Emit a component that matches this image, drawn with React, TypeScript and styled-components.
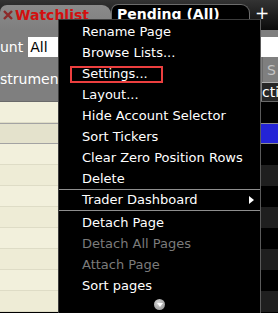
import React from 'react'
import styled, { createGlobalStyle } from 'styled-components'

const GlobalStyle = createGlobalStyle`
  html, body {
    margin: 0;
    padding: 0;
    background: #000;
  }
  body {
    font-family: 'DejaVu Sans', Verdana, sans-serif;
  }
`

const Screen = styled.div`
  position: relative;
  width: 278px;
  height: 313px;
  overflow: hidden;
  background: #000;
  display: flex;
  flex-direction: column;
`

const TabBar = styled.div`
  height: 30px;
  flex: none;
  display: flex;
  align-items: flex-end;
  background: linear-gradient(#333, #0b0b0b);
`

const Tab = styled.div<{ $active?: boolean }>`
  box-sizing: border-box;
  display: flex;
  align-items: flex-start;
  gap: 2px;
  flex: none;
  height: ${p => (p.$active ? 25 : 26)}px;
  width: ${p => (p.$active ? 111 : 139)}px;
  padding: ${p => (p.$active ? '2px 0 0 3px' : '1px 0 0 5px')};
  font: bold 14px/16px 'DejaVu Sans', Verdana, sans-serif;
  color: ${p => (p.$active ? '#d30f0f' : '#fff')};
  background: ${p => (p.$active ? 'linear-gradient(#8a8a8a, #7f7f7f)' : '#000')};
  border: ${p => (p.$active ? 'none' : '1px solid #6c6c6c')};
  border-bottom: none;
  border-radius: 7px 9px 0 0;
  white-space: nowrap;
`

const CloseIcon = styled.svg`
  margin-top: 3px;
  flex: none;
`

const AddTab = styled.span`
  margin: 0 0 8px 5px;
  color: #fff;
  font: 17px/17px 'DejaVu Sans', sans-serif;
`

const Panel = styled.div`
  flex: none;
  background: #7f7f7f;
  border-bottom: 1px solid #6a6a6a;
`

const FilterRow = styled.div`
  display: flex;
  align-items: center;
  gap: 5px;
  height: 20px;
  padding-top: 7px;
  color: #fff;
  font: 14px 'DejaVu Sans', sans-serif;
`

const FilterInput = styled.div`
  flex: 1;
  height: 20px;
  background: #fff;
  color: #000;
  padding-left: 2px;
  line-height: 20px;
`

const HeaderRow = styled.div`
  display: flex;
  height: 44px;
  color: #fff;
  font: 14px 'DejaVu Sans', sans-serif;
`

const HeaderCell = styled.div`
  flex: none;
  width: 262px;
  display: flex;
  align-items: center;
  white-space: nowrap;
  overflow: hidden;
`

const StackCell = styled.div`
  flex: 1;
  min-width: 0;
  display: flex;
  flex-direction: column;
`

const SubHead = styled.div<{ $dim?: boolean }>`
  flex: ${p => (p.$dim ? 26 : 18)};
  display: flex;
  align-items: center;
  padding-left: ${p => (p.$dim ? 4 : 0)}px;
  color: ${p => (p.$dim ? '#c4c4c4' : '#fff')};
  background: ${p => (p.$dim ? '#7f7f7f' : '#262626')};
  border-left: ${p => (p.$dim ? '1px solid #6a6a6a' : 'none')};
  border-top: ${p => (p.$dim ? 'none' : '1px solid #b0b0b0')};
  white-space: nowrap;
  overflow: hidden;
`

const Rows = styled.div`
  flex: 1;
  display: flex;
  flex-direction: column;
`

const Row = styled.div`
  display: flex;
  height: 21px;
  flex: none;
`

const NameCell = styled.div<{ $selected?: boolean; $odd?: boolean }>`
  width: 160px;
  box-sizing: border-box;
  background: ${p => (p.$selected ? '#e4e2cc' : p.$odd ? '#eeecd6' : '#f2f0dc')};
  border-bottom: 1px solid ${p => (p.$selected ? '#a3a3a3' : '#dedcc6')};
  border-top: ${p => (p.$selected ? '1px solid #a3a3a3' : 'none')};
`

const DataCell = styled.div<{ $selected?: boolean; $odd?: boolean }>`
  flex: 1;
  box-sizing: border-box;
  background: ${p => (p.$selected ? '#2424d6' : p.$odd ? '#1f1f1f' : '#000')};
  border-top: ${p => (p.$selected ? '1px solid #8c8c8c' : 'none')};
  border-bottom: ${p => (p.$selected ? '1px solid #8c8c8c' : 'none')};
`

const Menu = styled.div`
  position: absolute;
  left: 58px;
  top: 19px;
  width: 203px;
  height: 300px;
  box-sizing: border-box;
  padding-top: 1px;
  background: #000;
  border: 1px solid #3c3c3c;
  border-right-color: #5a5a5a;
  font: 13px 'DejaVu Sans', Verdana, sans-serif;
`

const MenuItem = styled.div<{ $disabled?: boolean; $short?: boolean }>`
  position: relative;
  height: ${p => (p.$short ? 20 : 21)}px;
  line-height: ${p => (p.$short ? 20 : 21)}px;
  padding-left: 23px;
  color: ${p => (p.$disabled ? '#7b7b7b' : '#fff')};
  white-space: nowrap;
`

const Highlight = styled.span`
  position: absolute;
  left: 11px;
  top: 3px;
  width: 93px;
  height: 17px;
  box-sizing: border-box;
  border: 2px solid #ec3f3f;
`

const SubArrow = styled.span`
  position: absolute;
  right: 6px;
  top: 6px;
  width: 0;
  height: 0;
  border-left: 5px solid #fff;
  border-top: 4px solid transparent;
  border-bottom: 4px solid transparent;
`

const Separator = styled.div<{ $gap?: number }>`
  height: 1px;
  background: #8e8e8e;
  margin-bottom: ${p => p.$gap ?? 0}px;
`

const ScrollFoot = styled.div`
  height: 16px;
  display: flex;
  justify-content: center;
  align-items: center;
`

const ScrollDown = styled.span`
  width: 11px;
  height: 11px;
  border-radius: 50%;
  background: radial-gradient(circle at 40% 35%, #d6d6d6, #8a8a8a);
  display: flex;
  align-items: center;
  justify-content: center;
  &::after {
    content: '';
    width: 0;
    height: 0;
    margin-top: 1px;
    border-top: 4px solid #fff;
    border-left: 3px solid transparent;
    border-right: 3px solid transparent;
  }
`

type Item = { label: string; disabled?: boolean; sep?: number; sub?: boolean; mark?: boolean }

const items: Item[] = [
  { label: 'Rename Page' },
  { label: 'Browse Lists...' },
  { label: 'Settings...', mark: true },
  { label: 'Layout...' },
  { label: 'Hide Account Selector' },
  { label: 'Sort Tickers' },
  { label: 'Clear Zero Position Rows' },
  { label: 'Delete', sep: 0 },
  { label: 'Trader Dashboard', sub: true, sep: 1 },
  { label: 'Detach Page' },
  { label: 'Detach All Pages', disabled: true },
  { label: 'Attach Page', disabled: true },
  { label: 'Sort pages' },
]

export default function App() {
  return (
    <Screen>
      <GlobalStyle />
      <TabBar>
        <Tab $active>
          <CloseIcon width="10" height="10" viewBox="0 0 10 10">
            <path d="M1 1L9 9M9 1L1 9" stroke="#8c2a2a" strokeWidth="2.4" />
          </CloseIcon>
          Watchlist
        </Tab>
        <Tab>Pending (All)</Tab>
        <AddTab>+</AddTab>
      </TabBar>
      <Panel>
        <FilterRow>
          <span>unt</span>
          <FilterInput>All</FilterInput>
        </FilterRow>
        <HeaderRow>
          <HeaderCell>strument</HeaderCell>
          <StackCell>
            <SubHead $dim>S</SubHead>
            <SubHead>ction</SubHead>
          </StackCell>
        </HeaderRow>
      </Panel>
      <Rows>
        {Array.from({ length: 10 }).map((_, i) => (
          <Row key={i}>
            <NameCell $selected={i === 1} $odd={i % 2 === 1} />
            <DataCell $selected={i === 1} $odd={i % 2 === 1} />
          </Row>
        ))}
      </Rows>
      <Menu>
        {items.map(it => (
          <React.Fragment key={it.label}>
            <MenuItem $disabled={it.disabled} $short={it.sub}>
              {it.mark && <Highlight />}
              {it.label}
              {it.sub && <SubArrow />}
            </MenuItem>
            {it.sep !== undefined && <Separator $gap={it.sep} />}
          </React.Fragment>
        ))}
        <ScrollFoot>
          <ScrollDown />
        </ScrollFoot>
      </Menu>
    </Screen>
  )
}
